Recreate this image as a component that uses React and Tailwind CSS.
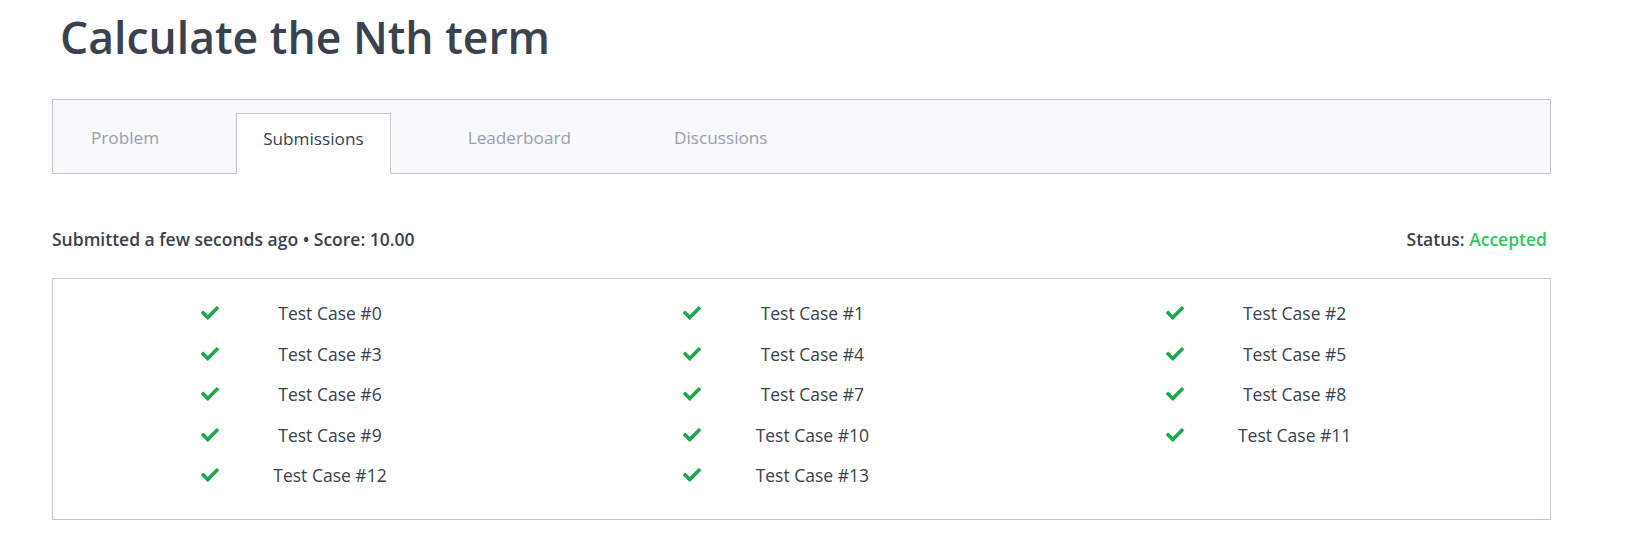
import { FaCheck } from 'react-icons/fa';

const tabs = [
  { label: 'Problem' },
  { label: 'Submissions', active: true },
  { label: 'Leaderboard' },
  { label: 'Discussions' },
];

const testCases = Array.from({ length: 14 }, (_, i) => i);

const App = () => {
  return (
    <div className="min-h-screen bg-white font-['Open_Sans',sans-serif] text-[#39424e]">
      <div className="ml-[52px] w-[1499px] pt-[10px]">
        <h1 className="pl-[8px] text-[44.5px] leading-[54px] font-semibold">Calculate the Nth term</h1>

        {/* tab bar */}
        <div className="mt-[35px] h-[75px] border border-[#c3c8d0] bg-[#f8f9fa] flex items-end pl-[12px] gap-[51px]">
          {tabs.map((t) =>
            t.active ? (
              <div
                key={t.label}
                className="h-[61px] -mb-px px-[26px] pt-[13px] bg-white border border-b-0 border-[#c3c8d0] text-[17.2px] leading-[24px] text-[#39424e]"
              >
                {t.label}
              </div>
            ) : (
              <div key={t.label} className="h-[61px] px-[26px] pt-[14px] text-[17.2px] leading-[24px] text-[#979faf]">
                {t.label}
              </div>
            )
          )}
        </div>

        {/* summary line */}
        <div className="mt-[53px] h-[24px] flex items-center justify-between pr-[4px] text-[17.5px] leading-[24px] font-semibold">
          <span>Submitted a few seconds ago • Score: 10.00</span>
          <span>
            Status: <span className="text-[#2ec866]">Accepted</span>
          </span>
        </div>

        {/* test cases */}
        <div className="mt-[27px] border border-[#c3c8d0] pt-[14px] pb-[23px] px-[25px] grid grid-cols-3">
          {testCases.map((n) => (
            <div key={n} className="h-[40.5px] flex items-center">
              <div className="w-[123px]" />
              <FaCheck size={18} className="text-[#1ba94c] shrink-0" />
              <div className="w-[222px] text-center text-[17.5px]">Test Case #{n}</div>
            </div>
          ))}
        </div>
      </div>
    </div>
  );
};

export default App;
